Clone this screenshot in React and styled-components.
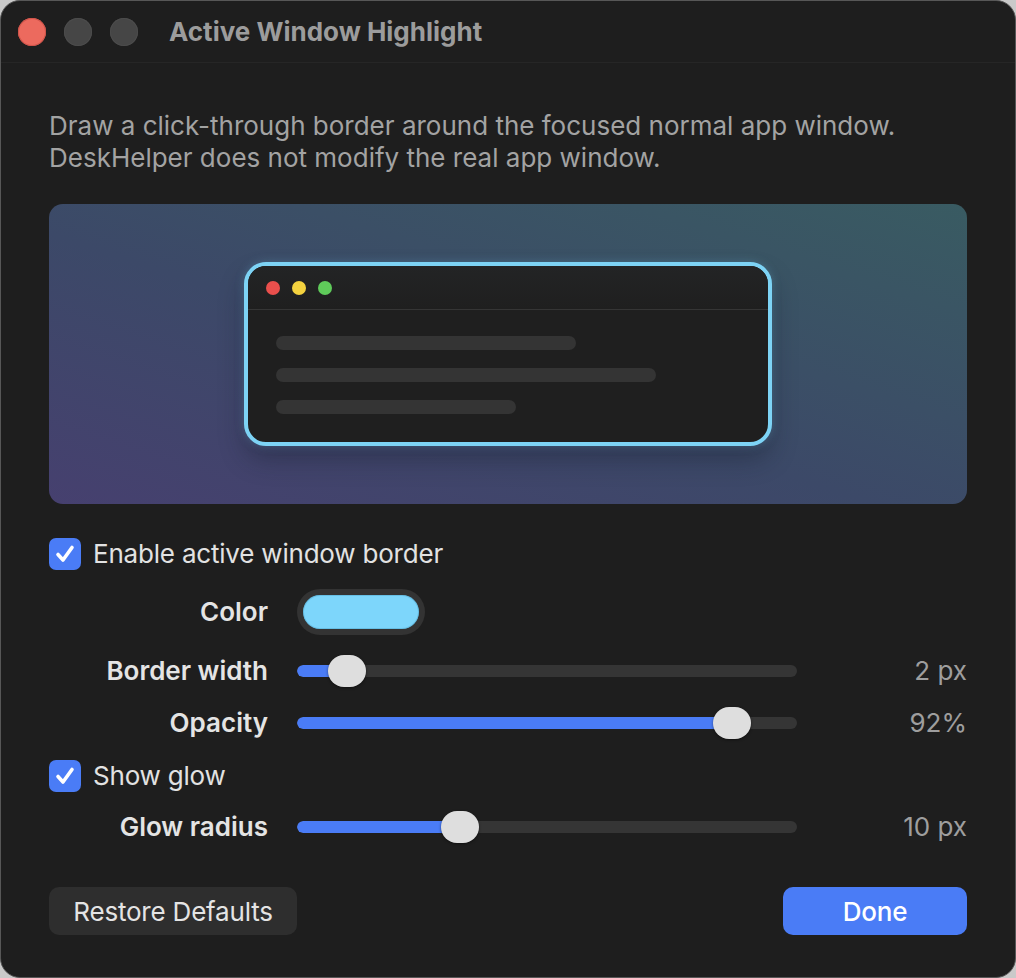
import React from 'react';
import styled, { createGlobalStyle } from 'styled-components';

const GlobalStyle = createGlobalStyle`
  html, body {
    margin: 0;
    padding: 0;
    background: #c9c9c9;
  }
  * {
    box-sizing: border-box;
  }
`;

const Window = styled.div`
  width: 1016px;
  height: 978px;
  background: #1e1e1e;
  border: 1px solid #575757;
  border-radius: 20px;
  overflow: hidden;
  font-family: Inter, "Noto Sans", sans-serif;
  display: flex;
  flex-direction: column;
`;

const TitleBar = styled.div`
  height: 62px;
  flex: none;
  display: flex;
  align-items: center;
  gap: 18px;
  padding-left: 17px;
  border-bottom: 1px solid #262626;
`;

const Light = styled.span`
  width: 28px;
  height: 28px;
  border-radius: 50%;
  background: ${p => p.color};
  box-shadow: inset 0 0 0 1px ${p => p.edge};
`;

const Title = styled.div`
  margin-left: 13px;
  font-size: 26px;
  font-weight: 700;
  color: #9c9c9c;
`;

const Content = styled.div`
  padding: 47px 48px 0;
  display: flex;
  flex-direction: column;
`;

const Description = styled.p`
  margin: 0;
  font-size: 26px;
  line-height: 32px;
  color: #a3a3a3;
`;

const Preview = styled.div`
  margin-top: 30px;
  height: 300px;
  border-radius: 14px;
  background: linear-gradient(to top right, #46406f 0%, #3c4968 45%, #395b62 100%);
  display: flex;
  align-items: center;
  justify-content: center;
`;

const MiniWindow = styled.div`
  width: 528px;
  height: 184px;
  border: 4px solid #7dd3f5;
  border-radius: 22px;
  background: #1f1f1f;
  box-shadow: 0 0 10px rgba(125, 211, 245, 0.25), 0 14px 24px rgba(20, 25, 40, 0.35);
  overflow: hidden;
`;

const MiniHeader = styled.div`
  height: 44px;
  display: flex;
  align-items: center;
  gap: 12px;
  padding-left: 18px;
  border-bottom: 1px solid #353535;
  background: linear-gradient(to bottom, #232425, #1f1f1f);
`;

const Dot = styled.span`
  width: 14px;
  height: 14px;
  border-radius: 50%;
  background: ${p => p.color};
`;

const MiniBody = styled.div`
  padding: 26px 0 0 28px;
  display: flex;
  flex-direction: column;
  gap: 18px;
`;

const Line = styled.div`
  height: 14px;
  width: ${p => p.w}px;
  border-radius: 7px;
  background: #343434;
`;

const CheckRow = styled.label`
  display: flex;
  align-items: center;
  gap: 12px;
  margin-top: ${p => p.top}px;
  font-size: 26px;
  line-height: 32px;
  color: #e2e2e2;
  letter-spacing: -0.2px;
`;

const CheckBox = styled.span`
  width: 32px;
  height: 32px;
  border-radius: 7px;
  background: #4a7cf6;
  display: flex;
  align-items: center;
  justify-content: center;
`;

const FormRow = styled.div`
  display: grid;
  grid-template-columns: 219px 500px 1fr;
  column-gap: 29px;
  align-items: center;
  margin-top: ${p => p.top}px;
  height: ${p => p.h}px;
`;

const FieldLabel = styled.div`
  text-align: right;
  font-size: 26px;
  line-height: 32px;
  font-weight: 600;
  color: #e4e4e4;
`;

const Value = styled.div`
  text-align: right;
  font-size: 26px;
  line-height: 32px;
  color: #9e9e9e;
`;

const SwatchWell = styled.div`
  width: 128px;
  height: 46px;
  border-radius: 23px;
  background: #333333;
  padding: 6px;
`;

const Swatch = styled.div`
  height: 100%;
  border-radius: 17px;
  background: #7dd6fb;
  box-shadow: inset 0 0 0 1px rgba(60, 150, 190, 0.35);
`;

const Track = styled.div`
  position: relative;
  height: 32px;
  display: flex;
  align-items: center;
`;

const Rail = styled.div`
  width: 100%;
  height: 12px;
  border-radius: 6px;
  background: #353535;
  overflow: hidden;
`;

const Fill = styled.div`
  height: 100%;
  background: #4a7cf6;
  border-radius: 6px;
`;

const Thumb = styled.div`
  position: absolute;
  top: 0;
  width: 38px;
  height: 32px;
  border-radius: 16px;
  background: #dedede;
  box-shadow: 0 1px 3px rgba(0, 0, 0, 0.45);
`;

const Footer = styled.div`
  margin-top: 44px;
  display: flex;
  justify-content: space-between;
`;

const Button = styled.button`
  height: 48px;
  padding: 0 18px;
  min-width: ${p => p.minW || 0}px;
  border: none;
  border-radius: 10px;
  font-family: inherit;
  font-size: 26px;
  font-weight: ${p => (p.primary ? 500 : 400)};
  letter-spacing: -0.2px;
  color: ${p => (p.primary ? '#ffffff' : '#e4e4e4')};
  background: ${p => (p.primary ? '#4a7cf6' : '#2e2e2e')};
`;

function Check() {
  return (
    <CheckBox>
      <svg width="24" height="24" viewBox="0 0 24 24">
        <path d="M5 12.5 L10 18 L19 5.5" fill="none" stroke="#fff" strokeWidth="3.6" strokeLinecap="round" strokeLinejoin="round" />
      </svg>
    </CheckBox>
  );
}

function Slider({ value, min, max }) {
  const frac = (value - min) / (max - min);
  const left = frac * (500 - 38);
  return (
    <Track>
      <Rail>
        <Fill style={{ width: left + 19 }} />
      </Rail>
      <Thumb style={{ left }} />
    </Track>
  );
}

export default function App() {
  return (
    <>
      <GlobalStyle />
      <Window>
        <TitleBar>
          <Light color="#ec6a5e" edge="#d0544a" />
          <Light color="#464646" edge="#4c4c4c" />
          <Light color="#464646" edge="#4c4c4c" />
          <Title>Active Window Highlight</Title>
        </TitleBar>
        <Content>
          <Description>
            Draw a click-through border around the focused normal app window.
            <br />
            DeskHelper does not modify the real app window.
          </Description>
          <Preview>
            <MiniWindow>
              <MiniHeader>
                <Dot color="#e94f4c" />
                <Dot color="#f4d23f" />
                <Dot color="#5fcb5a" />
              </MiniHeader>
              <MiniBody>
                <Line w={300} />
                <Line w={380} />
                <Line w={240} />
              </MiniBody>
            </MiniWindow>
          </Preview>
          <CheckRow top={34}>
            <Check />
            Enable active window border
          </CheckRow>
          <FormRow top={19} h={46}>
            <FieldLabel>Color</FieldLabel>
            <SwatchWell>
              <Swatch />
            </SwatchWell>
          </FormRow>
          <FormRow top={20} h={32}>
            <FieldLabel>Border width</FieldLabel>
            <Slider value={2} min={1} max={16} />
            <Value>2 px</Value>
          </FormRow>
          <FormRow top={20} h={32}>
            <FieldLabel>Opacity</FieldLabel>
            <Slider value={92} min={20} max={100} />
            <Value>92%</Value>
          </FormRow>
          <CheckRow top={21}>
            <Check />
            Show glow
          </CheckRow>
          <FormRow top={19} h={32}>
            <FieldLabel>Glow radius</FieldLabel>
            <Slider value={10} min={0} max={32} />
            <Value>10 px</Value>
          </FormRow>
          <Footer>
            <Button minW={248}>Restore Defaults</Button>
            <Button primary minW={184}>Done</Button>
          </Footer>
        </Content>
      </Window>
    </>
  );
}
